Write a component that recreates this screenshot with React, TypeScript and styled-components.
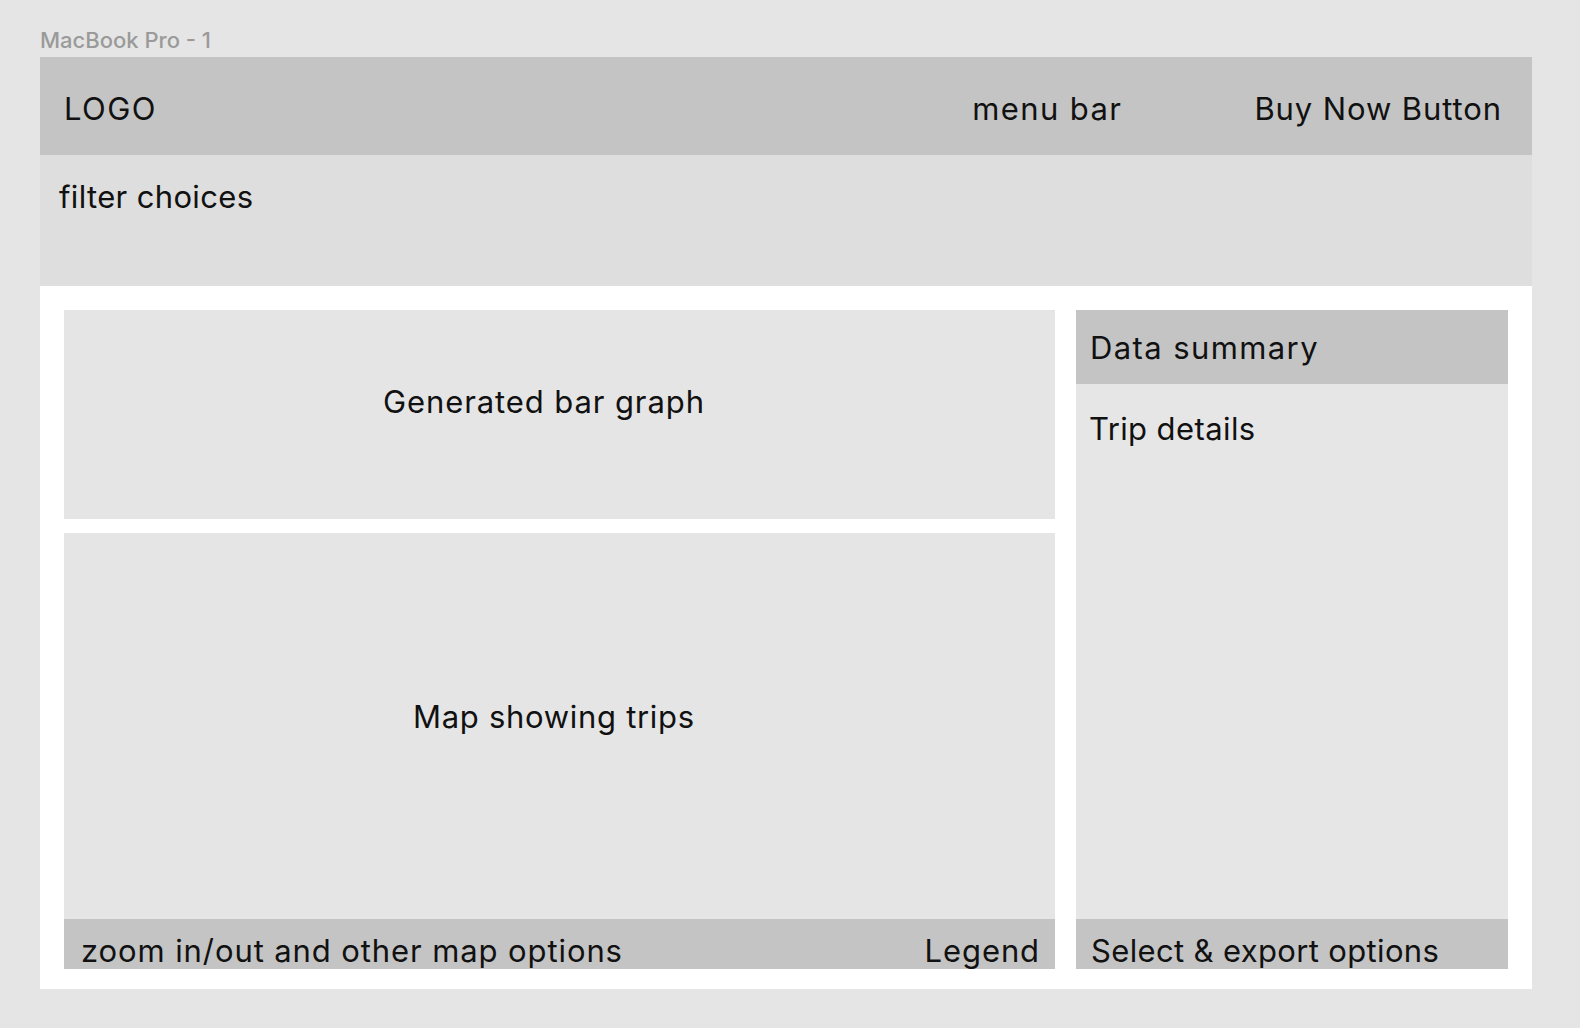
import styled, { createGlobalStyle } from 'styled-components';

const GlobalStyle = createGlobalStyle`
  html, body {
    margin: 0;
    padding: 0;
    background: #e5e5e5;
  }
  * {
    box-sizing: border-box;
  }
`;

const App = () => {
  return (
    <>
      <GlobalStyle />
      <Canvas>
        <FrameLabel>MacBook Pro - 1</FrameLabel>
        <Frame>
          <Header>
            <Label $tracking={1.4}>LOGO</Label>
            <HeaderRight>
              <Label $tracking={1.4}>menu bar</Label>
              <Label>Buy Now Button</Label>
            </HeaderRight>
          </Header>
          <FilterBar>
            <Label $tracking={0.35}>filter choices</Label>
          </FilterBar>
          <Content>
            <LeftColumn>
              <GraphPanel>
                <PanelTitle $top={76} $left={319}>
                  Generated bar graph
                </PanelTitle>
              </GraphPanel>
              <MapPanel>
                <MapArea>
                  <PanelTitle $top={168} $left={349} $tracking={0.7}>
                    Map showing trips
                  </PanelTitle>
                </MapArea>
                <BottomBar $padLeft={17}>
                  <Label>zoom in/out and other map options</Label>
                  <Label>Legend</Label>
                </BottomBar>
              </MapPanel>
            </LeftColumn>
            <SidePanel>
              <SideHeader>
                <Label $tracking={1.4}>Data summary</Label>
              </SideHeader>
              <SideBody>
                <Label $tracking={0.4}>Trip details</Label>
              </SideBody>
              <BottomBar $padLeft={15}>
                <Label $tracking={0.35}>Select &amp; export options</Label>
              </BottomBar>
            </SidePanel>
          </Content>
        </Frame>
      </Canvas>
    </>
  );
};

export default App;

const Canvas = styled.div`
  display: flex;
  flex-direction: column;
  padding: 29px 48px 0 40px;
  min-height: 1028px;
`;

const FrameLabel = styled.div`
  font-family: Inter, 'Liberation Sans', sans-serif;
  font-size: 22px;
  line-height: 22px;
  font-weight: 500;
  color: #9a9a9a;
  margin-bottom: 6px;
`;

const Frame = styled.div`
  display: flex;
  flex-direction: column;
  width: 1492px;
  background: #ffffff;
`;

const Label = styled.span<{ $tracking?: number }>`
  font-family: Inter, 'Liberation Sans', sans-serif;
  font-size: 31px;
  line-height: 31px;
  font-weight: 400;
  letter-spacing: ${({ $tracking = 0.9 }) => $tracking}px;
  color: #111111;
  white-space: nowrap;
`;

const Header = styled.div`
  display: flex;
  align-items: center;
  justify-content: space-between;
  height: 98px;
  padding: 5px 30px 0 24px;
  background: #c4c4c4;
`;

const HeaderRight = styled.div`
  display: flex;
  align-items: center;
  gap: 132px;
`;

const FilterBar = styled.div`
  display: flex;
  height: 131px;
  padding: 26px 19px 0;
  background: #dedede;
`;

const Content = styled.div`
  display: grid;
  grid-template-columns: 991px 432px;
  gap: 21px;
  height: 703px;
  padding: 24px 24px 20px 24px;
`;

const LeftColumn = styled.div`
  display: flex;
  flex-direction: column;
  gap: 14px;
`;

const GraphPanel = styled.div`
  display: flex;
  height: 209px;
  background: #e5e5e5;
`;

const MapPanel = styled.div`
  display: flex;
  flex-direction: column;
  flex: 1;
  background: #e5e5e5;
`;

const MapArea = styled.div`
  display: flex;
  flex: 1;
`;

const PanelTitle = styled(Label)<{ $top: number; $left: number }>`
  padding-top: ${({ $top }) => $top}px;
  padding-left: ${({ $left }) => $left}px;
`;

const BottomBar = styled.div<{ $padLeft: number }>`
  display: flex;
  justify-content: space-between;
  height: 50px;
  padding: 16px 15px 0 ${({ $padLeft }) => $padLeft}px;
  background: #c4c4c4;
`;

const SidePanel = styled.div`
  display: flex;
  flex-direction: column;
  background: #e6e6e6;
`;

const SideHeader = styled.div`
  display: flex;
  align-items: center;
  height: 74px;
  padding: 0 14px;
  background: #c4c4c4;
`;

const SideBody = styled.div`
  display: flex;
  flex: 1;
  padding: 29px 13px 0;
`;
